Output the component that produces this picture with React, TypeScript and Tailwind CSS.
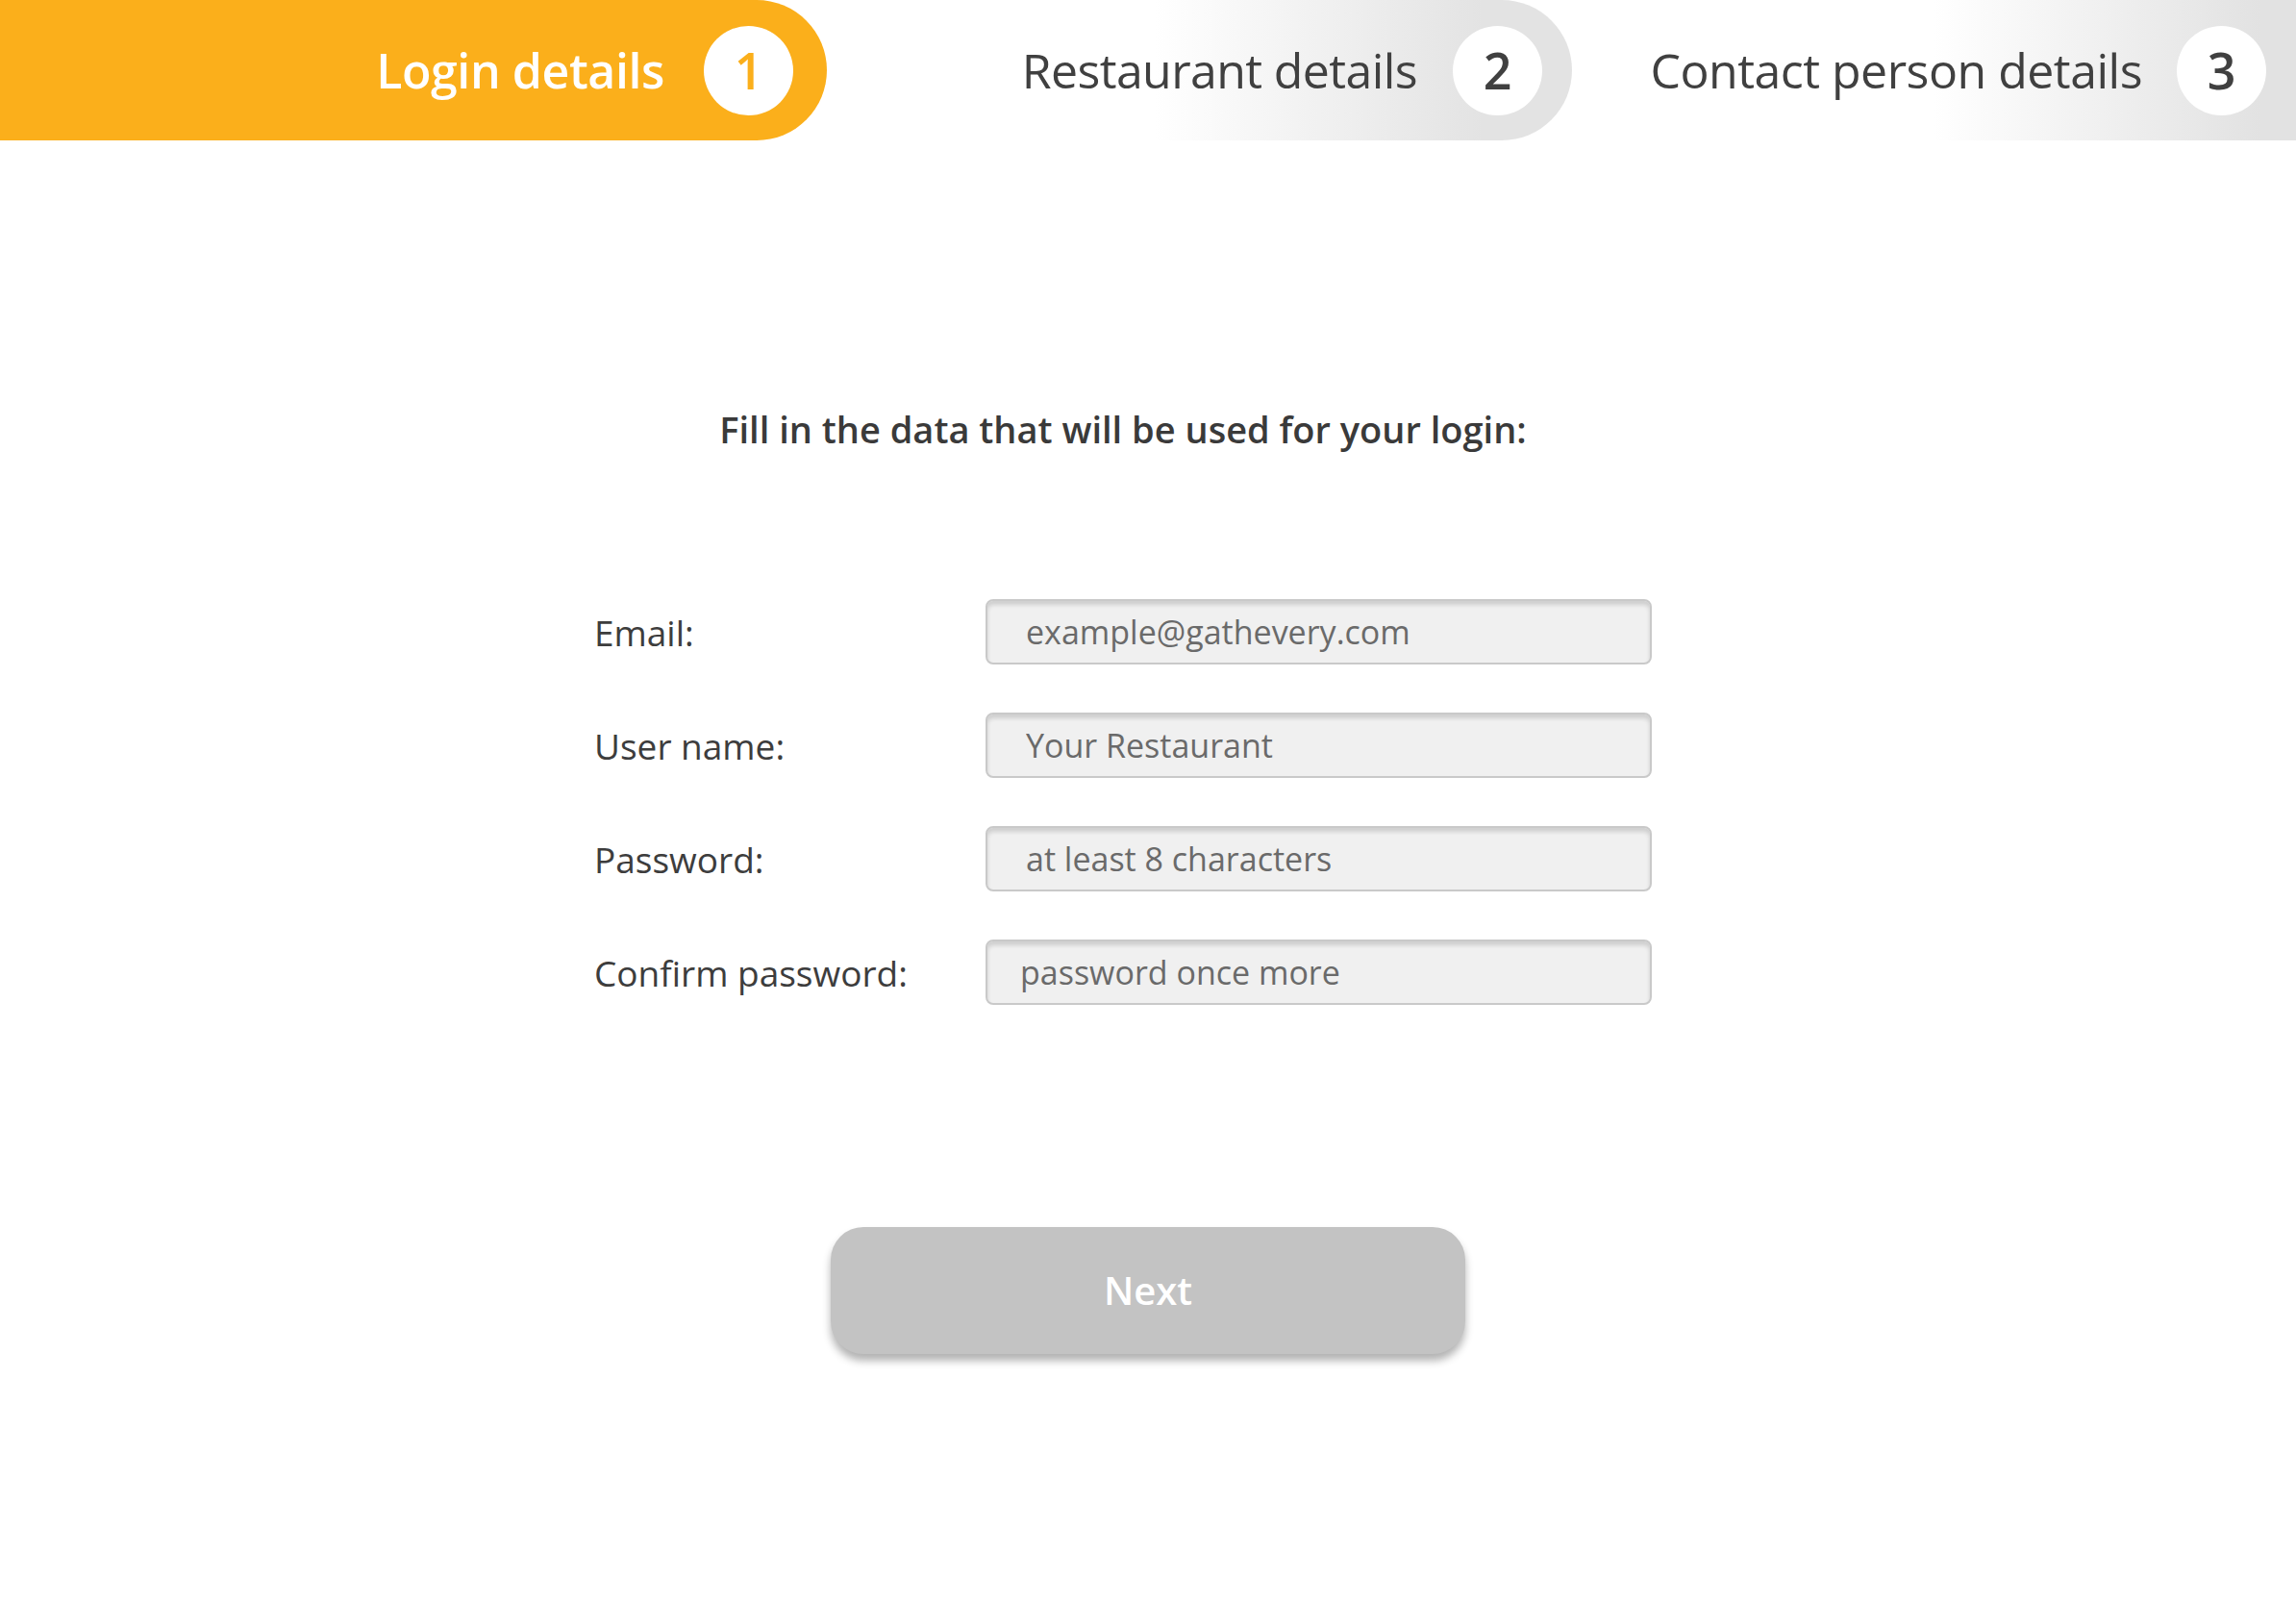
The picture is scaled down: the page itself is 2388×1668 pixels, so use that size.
import React from "react";

const font = { fontFamily: '"Open Sans", "Noto Sans", sans-serif' };

function Field({ label, placeholder, tight = false }: { label: string; placeholder: string; tight?: boolean }) {
  return (
    <div className="flex items-center">
      <label className="w-[407px] text-[37px] text-[#3d3d3d] leading-none">{label}</label>
      <input
        type="text"
        placeholder={placeholder}
        className={`h-[68px] w-[693px] rounded-[8px] border-2 border-[#c9c9c9] bg-[#f0f0f0] ${tight ? "pl-[34px]" : "pl-[40px]"} text-[34px] text-[#555] placeholder:text-[#6a6a6a] shadow-[inset_0_4px_4px_rgba(0,0,0,0.14)] outline-none`}
        style={font}
      />
    </div>
  );
}

export default function App() {
  return (
    <div className="min-h-[1668px] w-full bg-white" style={font}>
      <header className="flex h-[146px] w-full">
        <div className="flex h-full w-[860px] items-center justify-end rounded-r-full bg-[#fbaf1b] pr-[35px]">
          <span className="mr-[41px] text-[50px] font-semibold tracking-[-0.4px] text-white leading-none">Login details</span>
          <span className="flex h-[93px] w-[93px] items-center justify-center rounded-full bg-white text-[52px] font-semibold text-[#fbaf1b] leading-none">1</span>
        </div>
        <div className="flex h-full w-[775px] items-center justify-end rounded-r-full bg-[linear-gradient(to_right,#ffffff_44%,#e3e3e3_88%)] pr-[31px]">
          <span className="mr-[37px] text-[50px] tracking-[-0.6px] text-[#404040] leading-none">Restaurant details</span>
          <span className="flex h-[93px] w-[93px] items-center justify-center rounded-full bg-white text-[52px] font-semibold text-[#404040] leading-none">2</span>
        </div>
        <div className="flex h-full flex-1 items-center justify-end bg-[linear-gradient(to_right,#ffffff_50%,#e2e2e2_95%)] pr-[31px]">
          <span className="mr-[36px] text-[50px] tracking-[-0.5px] text-[#404040] leading-none">Contact person details</span>
          <span className="flex h-[93px] w-[93px] items-center justify-center rounded-full bg-white text-[52px] font-semibold text-[#404040] leading-none">3</span>
        </div>
      </header>

      <main className="flex flex-col">
        <div className="ml-[618px] mt-[273px] w-[1100px]">
          <h1 className="text-center text-[38px] font-semibold leading-[54px] text-[#3a3a3a]">
            Fill in the data that will be used for your login:
          </h1>
          <div className="mt-[150px] flex flex-col gap-[50px]">
            <Field label="Email:" placeholder="example@gathevery.com" />
            <Field label="User name:" placeholder="Your Restaurant" />
            <Field label="Password:" placeholder="at least 8 characters" />
            <Field label="Confirm password:" placeholder="password once more" tight />
          </div>
        </div>
        <div className="mt-[231px] flex justify-center">
          <button className="h-[132px] w-[660px] rounded-[34px] bg-[#c3c3c3] text-[40px] font-semibold text-white shadow-[0_7px_8px_rgba(0,0,0,0.3)]" style={font}>
            Next
          </button>
        </div>
      </main>
    </div>
  );
}
